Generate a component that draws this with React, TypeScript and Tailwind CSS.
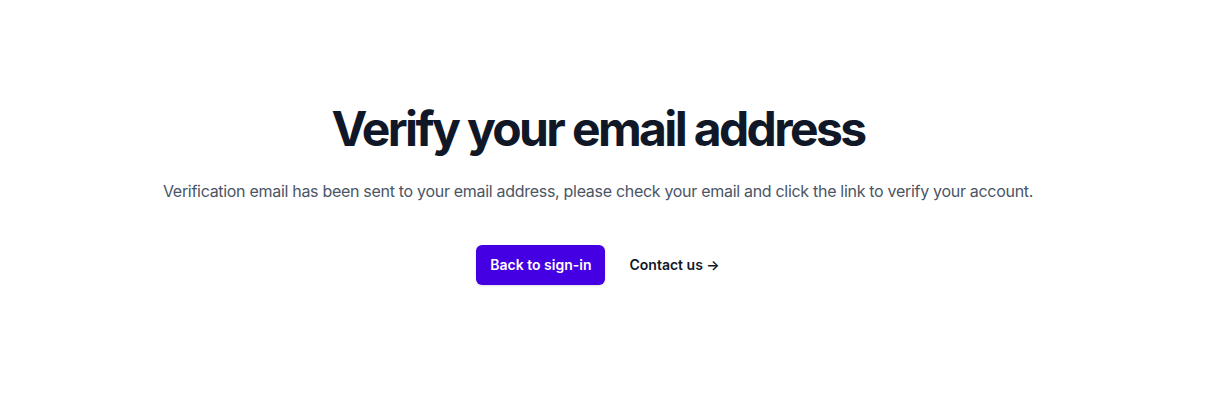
export default function App() {
  return (
    <main className="flex min-h-[405px] justify-center bg-white pl-6 pr-[59px] pt-[105px] font-['Inter',sans-serif]">
      <div className="text-center">
        <h1 className="text-5xl font-bold tracking-[-0.055em] text-gray-900">Verify your email address</h1>
        <p className="mt-6 text-base leading-7 tracking-[-0.3px] text-gray-600">
          Verification email has been sent to your email address, please check your email and click the link to verify your account.
        </p>
        <div className="mt-10 flex items-center justify-center gap-x-6">
          <a href="#" className="rounded-md bg-[#4400e3] px-3.5 py-2.5 text-sm font-semibold text-white shadow-sm">
            Back to sign-in
          </a>
          <a href="#" className="text-sm font-semibold text-gray-900">
            Contact us <span aria-hidden="true">&rarr;</span>
          </a>
        </div>
      </div>
    </main>
  )
}
